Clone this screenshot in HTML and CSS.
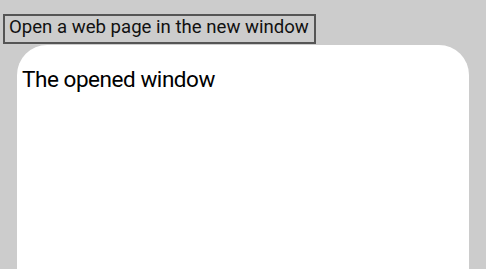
FILE: index.html
```html
<!DOCTYPE html>
<html lang="en">
<head>
    <meta charset="UTF-8">
    <meta name="viewport" content="width=device-width, initial-scale=1.0">
    <title>Open window</title>
    <link rel="stylesheet" href="styles.css">
</head>
<body>
    <div class="page">
        <button class="open-btn">Open a web page in the new window</button>
        <div class="window">
            <p class="window-title">The opened window</p>
        </div>
    </div>
</body>
</html>
```
FILE: styles.css
```css
html, body {
    margin: 0;
    height: 100%;
}
body {
    font-family: Roboto, Arial, sans-serif;
    background-color: #cccccc;
    color: #000;
}
.page {
    height: 100%;
    box-sizing: border-box;
    display: flex;
    flex-direction: column;
    align-items: flex-start;
    padding: 14px 0 0 3px;
}
.open-btn {
    font-family: inherit;
    font-size: 18.6px;
    width: 313px;
    height: 30px;
    padding: 0 0 4px 4px;
    text-align: left;
    background: #cccccc;
    border: 2px solid #555;
    color: #111;
    line-height: 22px;
}
.window {
    flex: 1;
    margin: 1px 0 0 14px;
    width: 452px;
    background: #fff;
    border-radius: 30px 30px 0 0;
    padding: 20px 5px 0;
    box-sizing: border-box;
}
.window-title {
    margin: 0;
    font-size: 22.5px;
    letter-spacing: -0.45px;
    line-height: 28px;
}
```
